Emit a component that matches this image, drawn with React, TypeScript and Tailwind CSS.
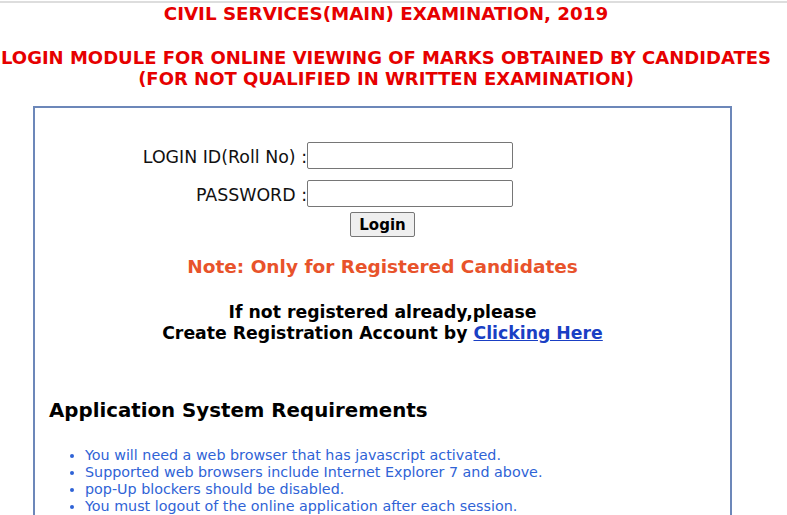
import React from 'react';

const requirements = [
  'You will need a web browser that has javascript activated.',
  'Supported web browsers include Internet Explorer 7 and above.',
  'pop-Up blockers should be disabled.',
  'You must logout of the online application after each session.',
];

const App: React.FC = () => {
  return (
    <div className="min-h-screen bg-white font-['DejaVu_Sans',sans-serif] overflow-hidden">
      <div className="mt-px border-t-2 border-[#dddddd]" />

      {/* Header */}
      <div className="text-center font-bold text-[#e60000] pr-[15px]">
        <h1 className="text-[18.3px] leading-[22px]">CIVIL SERVICES(MAIN) EXAMINATION, 2019</h1>
        <h2 className="text-[18px] leading-[21px] mt-[22px]">
          LOGIN MODULE FOR ONLINE VIEWING OF MARKS OBTAINED BY CANDIDATES
          <br />
          (FOR NOT QUALIFIED IN WRITTEN EXAMINATION)
        </h2>
      </div>

      {/* Login box */}
      <div className="ml-[33px] mt-[17px] w-[699px] h-[500px] border-2 border-[#6c87b9]">
        <div className="pt-[34px] flex flex-col gap-[11px]">
          <div className="flex items-center">
            <label className="w-[272px] mt-[3px] text-right text-[17.4px] leading-[20px] text-[#111]">LOGIN ID(Roll No) :</label>
            <input type="text" className="w-[206px] h-[27px] border border-[#767676] rounded-[2px]" />
          </div>
          <div className="flex items-center">
            <label className="w-[272px] mt-[3px] text-right text-[17.4px] leading-[20px] text-[#111]">PASSWORD :</label>
            <input type="password" className="w-[206px] h-[27px] border border-[#767676] rounded-[2px]" />
          </div>
        </div>
        <div className="flex justify-center mt-[5px]">
          <button className="w-[65px] h-[25px] bg-[#efefef] border border-[#767676] rounded-[2px] text-[15px] leading-[20px] font-bold text-black">
            Login
          </button>
        </div>

        <p className="text-center mt-[19px] text-[18.5px] leading-[22px] font-bold text-[#e8532b]">
          Note: Only for Registered Candidates
        </p>

        <p className="text-center mt-[24px] text-[17.3px] leading-[21px] font-bold text-black">
          If not registered already,please
          <br />
          Create Registration Account by{' '}
          <a href="#" className="text-[#1a3fc4] underline">Clicking Here</a>
        </p>

        <h3 className="ml-[14px] mt-[55px] text-[19.8px] leading-[24px] font-bold text-black">
          Application System Requirements
        </h3>

        <ul className="mt-[24px] ml-[50px] list-disc text-[14.3px] leading-[17px] text-[#2f63d6]">
          {requirements.map(r => (
            <li key={r}>{r}</li>
          ))}
        </ul>
      </div>
    </div>
  );
};

export default App;
